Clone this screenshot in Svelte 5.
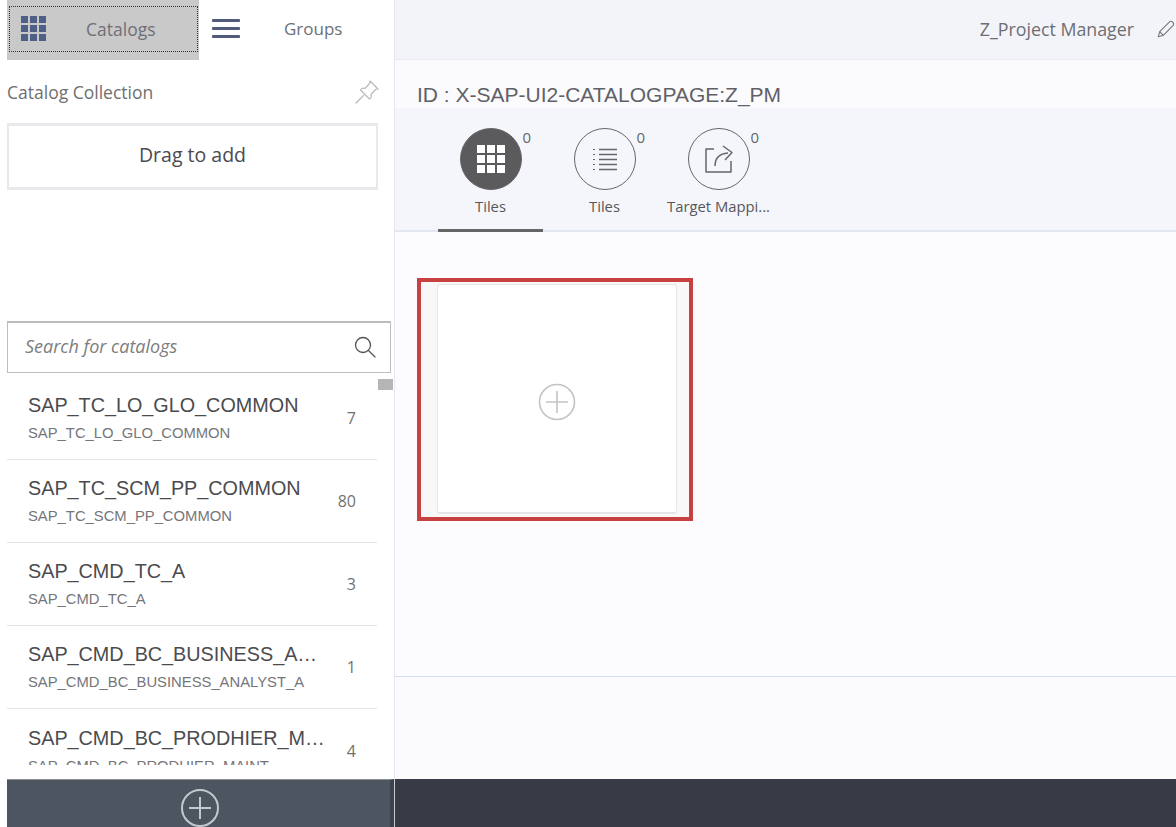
<script lang="ts">
  const catalogs = [
    { title: 'SAP_TC_LO_GLO_COMMON', sub: 'SAP_TC_LO_GLO_COMMON', count: 7 },
    { title: 'SAP_TC_SCM_PP_COMMON', sub: 'SAP_TC_SCM_PP_COMMON', count: 80 },
    { title: 'SAP_CMD_TC_A', sub: 'SAP_CMD_TC_A', count: 3 },
    { title: 'SAP_CMD_BC_BUSINESS_ANALYST_A', sub: 'SAP_CMD_BC_BUSINESS_ANALYST_A', count: 1 },
    { title: 'SAP_CMD_BC_PRODHIER_MAINT', sub: 'SAP_CMD_BC_PRODHIER_MAINT', count: 4 }
  ];
  const cells = [0, 1, 2, 3, 4, 5, 6, 7, 8];
</script>

<div class="page">
  <div class="main">
    <aside class="side">
      <nav class="nav">
        <button type="button" class="nav-btn nav-btn--active">
          <span class="grid-icon">
            {#each cells as c (c)}<i></i>{/each}
          </span>
          <span class="nav-label">Catalogs</span>
        </button>
        <button type="button" class="nav-btn nav-btn--groups">
          <span class="burger"><i></i><i></i><i></i></span>
          <span class="nav-label">Groups</span>
        </button>
      </nav>

      <div class="collection-head">
        <span>Catalog Collection</span>
        <svg width="26" height="26" viewBox="0 0 26 26" fill="none" stroke="#b9b9b9" stroke-width="1.2" stroke-linejoin="round" stroke-linecap="round">
          <path d="M16 2 L24 10 L21.5 10.5 L17 15.5 Q18 19 15.5 20 L6.5 11 Q8 8.5 11 9.5 L15.5 4.5 Z" />
          <path d="M9.5 16.5 L2 24" />
        </svg>
      </div>
      <div class="dropzone">Drag to add</div>

      <div class="search">
        <span>Search for catalogs</span>
        <svg width="24" height="24" viewBox="0 0 24 24" fill="none" stroke="#555" stroke-width="1.3" stroke-linecap="round">
          <circle cx="10" cy="10" r="7.5" />
          <path d="M15.5 15.5 L22 22" />
        </svg>
      </div>

      <div class="list">
        <div class="thumb"></div>
        {#each catalogs as item (item.title)}
          <div class="row">
            <div class="row-text">
              <div class="row-title">{item.title}</div>
              <div class="row-sub">{item.sub}</div>
            </div>
            <span class="row-count">{item.count}</span>
          </div>
        {/each}
      </div>
    </aside>

    <section class="content">
      <header class="topbar">
        <span>Z_Project Manager</span>
        <svg width="18" height="20" viewBox="0 0 20 20" fill="none" stroke="#777" stroke-width="1.2" stroke-linejoin="round">
          <path d="M1.5 18.5 L3 13 L14.5 1.5 Q16 1 17.5 2.5 Q19 4 18.5 5.5 L7 17 Z" />
          <path d="M3 13 L7 17" />
        </svg>
      </header>

      <h1 class="page-id">ID : X-SAP-UI2-CATALOGPAGE:Z_PM</h1>

      <div class="tabs">
        <div class="tab tab--active">
          <div class="tab-circle">
            <span class="tab-grid">
              {#each cells as c (c)}<i></i>{/each}
            </span>
            <sup class="tab-count">0</sup>
          </div>
          <span class="tab-label">Tiles</span>
        </div>
        <div class="tab">
          <div class="tab-circle">
            <svg width="26" height="26" viewBox="0 0 26 26" fill="none" stroke="#666" stroke-width="1.3">
              <path d="M7 3.5H25M7 8.5H25M7 13.500H25M7 18.5H25M7 23.500H25" />
              <path d="M1 3.5H3M1 8.5H3M1 13.500H3M1 18.5H3M1 23.500H3" stroke-width="1.2" />
            </svg>
            <sup class="tab-count">0</sup>
          </div>
          <span class="tab-label">Tiles</span>
        </div>
        <div class="tab">
          <div class="tab-circle">
            <svg width="32" height="32" viewBox="0 0 32 32" fill="none" stroke="#666" stroke-width="1.5" stroke-linejoin="round">
              <path d="M11 6 H3 V29 H28 V18" />
              <path d="M12 23 Q12 11 25 10" />
              <path d="M20 3 L29 9.500 L22 17" />
            </svg>
            <sup class="tab-count">0</sup>
          </div>
          <span class="tab-label">Target Mappi...</span>
        </div>
      </div>

      <div class="tiles">
        <div class="highlight">
          <div class="tile">
            <svg width="38" height="38" viewBox="0 0 38 38" fill="none" stroke="#c4c4c4" stroke-width="1.6">
              <circle cx="19" cy="19" r="17.5" />
              <path d="M19 8 V30 M8 19 H30" />
            </svg>
          </div>
        </div>
      </div>

      <div class="rule"></div>
    </section>
  </div>

  <footer class="footer">
    <div class="footer-left">
      <svg width="40" height="40" viewBox="0 0 40 40" fill="none" stroke="#c4c8cf" stroke-width="2">
        <circle cx="20" cy="20" r="18" />
        <path d="M20 9 V31 M9 20 H31" />
      </svg>
    </div>
    <div class="footer-right"></div>
  </footer>
</div>

<style>
  :global(body) {
    background: #fff;
  }

  .page {
    width: 1176px;
    height: 827px;
    display: flex;
    flex-direction: column;
    overflow: hidden;
    font-family: "Open Sans", "Liberation Sans", sans-serif;
    color: #555;
  }

  .main {
    display: flex;
    height: 779px;
  }

  .side {
    flex: none;
    background: #fff;
    border-right: 1px solid #e6e7ec;
    display: flex;
    flex-direction: column;
    padding-left: 7px;
    box-sizing: border-box;
    width: 395px;
  }

  .nav {
    display: flex;
    height: 60px;
    flex: none;
  }

  .nav-btn {
    display: flex;
    align-items: center;
    border: none;
    background: none;
    padding: 0;
    font: inherit;
    color: #6d7078;
  }

  .nav-btn--active {
    width: 192px;
    background: #c9c9c9;
    position: relative;
    padding-left: 14px;
    padding-bottom: 3px;
  }

  .nav-btn--active::after {
    content: '';
    position: absolute;
    left: 2px;
    right: 1px;
    top: 6px;
    bottom: 8px;
    border: 1px dotted #333;
  }

  .nav-btn--groups {
    padding-left: 13px;
    padding-bottom: 3px;
  }

  .grid-icon {
    display: grid;
    grid-template-columns: repeat(3, 7px);
    grid-auto-rows: 7px;
    gap: 2px;
  }

  .grid-icon i {
    background: #4f6088;
  }

  .burger {
    display: flex;
    flex-direction: column;
    gap: 5px;
    width: 28px;
  }

  .burger i {
    height: 3px;
    border-radius: 1px;
    background: #4f5b78;
  }

  .nav-label {
    font-size: 17.5px;
  }

  .nav-btn--active .nav-label {
    margin-left: 40px;
  }

  .nav-btn--groups .nav-label {
    margin-left: 44px;
    font-size: 17px;
  }

  .collection-head {
    height: 63px;
    flex: none;
    display: flex;
    align-items: center;
    justify-content: space-between;
    padding-right: 14px;
    font-size: 17.5px;
    color: #6f6f6f;
    box-sizing: border-box;
  }

  .dropzone {
    width: 371px;
    height: 67px;
    flex: none;
    box-sizing: border-box;
    border: 3px solid #e9e9ed;
    border-left-width: 2px;
    border-right-width: 2px;
    background: #fff;
    display: flex;
    align-items: center;
    justify-content: center;
    font-size: 19.5px;
    color: #4a4a4f;
    padding-bottom: 4px;
  }

  .search {
    margin-top: 131px;
    flex: none;
    width: 384px;
    height: 52px;
    box-sizing: border-box;
    border: 1px solid #bdbdbd;
    border-top-width: 2px;
    padding: 0 13px 4px 17px;
    display: flex;
    align-items: center;
    justify-content: space-between;
    font-size: 18px;
    font-style: italic;
    color: #7d7d7d;
  }

  .search svg {
    margin-top: 3px;
  }

  .list {
    position: relative;
    flex: 1;
    min-height: 0;
    margin-bottom: 14px;
    overflow: hidden;
    padding-top: 4px;
  }

  .thumb {
    position: absolute;
    right: 1px;
    top: 6px;
    width: 15px;
    height: 11px;
    background: #b5b5b5;
  }

  .row {
    width: 370px;
    height: 83px;
    box-sizing: border-box;
    border-bottom: 1px solid #e4e4e6;
    padding: 0 21px;
    display: flex;
    align-items: center;
  }

  .row:last-child {
    border-bottom: none;
  }

  .row-text {
    flex: 1;
    min-width: 0;
  }

  .row-title {
    font-size: 19.8px;
    line-height: 28px;
    color: #4b4b4e;
    font-family: "Liberation Sans", sans-serif;
    white-space: nowrap;
    overflow: hidden;
    text-overflow: ellipsis;
    width: 298px;
    margin-top: -2px;
  }

  .row-sub {
    font-size: 14.8px;
    line-height: 20px;
    margin-top: 4px;
    color: #75757a;
    font-family: "Liberation Sans", sans-serif;
    white-space: nowrap;
    overflow: hidden;
    text-overflow: ellipsis;
    width: 298px;
  }

  .row-count {
    font-size: 16px;
    color: #717171;
  }

  .content {
    flex: 1;
    min-width: 0;
    background: #fbfbfe;
    display: flex;
    flex-direction: column;
  }

  .topbar {
    height: 60px;
    flex: none;
    box-sizing: border-box;
    background: #f3f4f9;
    border-bottom: 1px solid #eaebf0;
    display: flex;
    align-items: center;
    justify-content: flex-end;
    gap: 23px;
    padding: 0 1px 2px 0;
    font-size: 17.8px;
    color: #6e6e72;
  }

  .page-id {
    margin: 0;
    height: 48px;
    flex: none;
    box-sizing: border-box;
    padding: 21px 0 0 22px;
    font-family: "Liberation Sans", sans-serif;
    font-size: 21px;
    line-height: 28px;
    font-weight: 400;
    color: #5f6166;
    white-space: nowrap;
  }

  .tabs {
    height: 124px;
    flex: none;
    box-sizing: border-box;
    background: #f5f6fb;
    border-bottom: 2px solid #e2e7f2;
    display: flex;
    padding: 20px 0 0 43px;
  }

  .tab {
    width: 105px;
    margin-right: 9px;
    height: 104px;
    box-sizing: border-box;
    display: flex;
    flex-direction: column;
    align-items: center;
  }

  .tab--active {
    border-bottom: 3px solid #666;
  }

  .tab-circle {
    position: relative;
    width: 62px;
    height: 62px;
    box-sizing: border-box;
    border: 1px solid #666;
    border-radius: 50%;
    display: flex;
    align-items: center;
    justify-content: center;
  }

  .tab--active .tab-circle {
    background: #5b5b5e;
  }

  .tab-grid {
    display: grid;
    grid-template-columns: repeat(3, 8px);
    grid-auto-rows: 8px;
    gap: 2px;
  }

  .tab-grid i {
    background: #fff;
  }

  .tab-count {
    position: absolute;
    left: 62px;
    top: -1px;
    font-size: 15px;
    line-height: 18px;
    color: #666;
  }

  .tab-label {
    margin-top: 6px;
    font-size: 14.8px;
    line-height: 20px;
    color: #55565a;
    white-space: nowrap;
  }

  .tiles {
    height: 444px;
    flex: none;
    box-sizing: border-box;
    padding: 46px 0 0 22px;
    background: #fcfcff;
  }

  .highlight {
    width: 276px;
    height: 243px;
    box-sizing: border-box;
    border: 4px solid #c8403f;
    background: #f8f8f9;
    padding: 2px 12px 3px 16px;
  }

  .tile {
    height: 100%;
    background: #fff;
    border: 1px solid #e6e6e8;
    border-bottom-width: 2px;
    border-radius: 3px;
    box-sizing: border-box;
    display: flex;
    align-items: center;
    justify-content: center;
    padding-top: 6px;
  }

  .rule {
    height: 1px;
    background: #d5dfee;
    flex: none;
  }

  .footer {
    height: 48px;
    flex: none;
    display: flex;
    background: #fff;
  }

  .footer-left {
    width: 387px;
    margin-left: 7px;
    background: #4d5561;
    border-top: 1px solid #8b8f96;
    border-right: 4px solid #3c4250;
    box-sizing: border-box;
    display: flex;
    justify-content: center;
    padding: 8px 0 0 2px;
  }

  .footer-right {
    flex: 1;
    border-left: 1px solid #c7cad0;
    background: #383b46;
  }
</style>
